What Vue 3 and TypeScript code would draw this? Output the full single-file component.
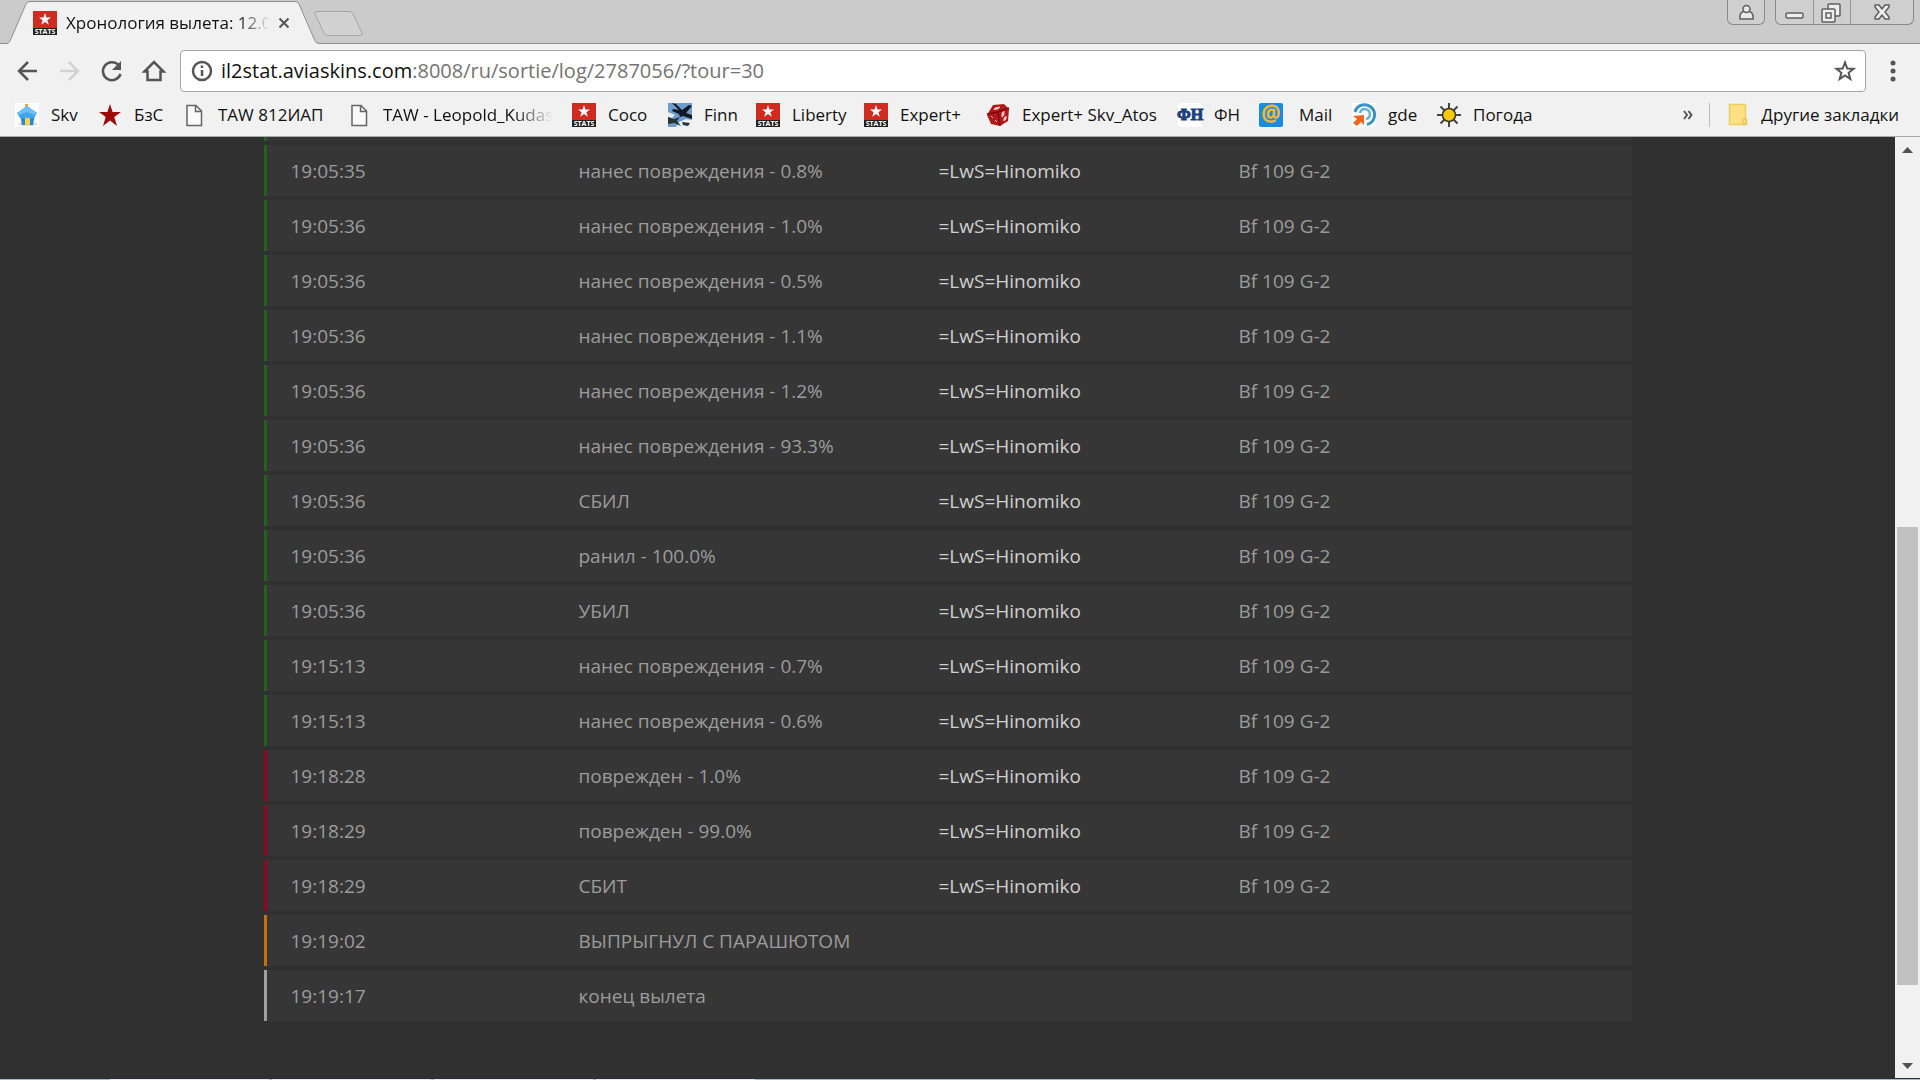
<script setup lang="ts">
interface Bookmark {
  label: string
  icon: string
  width: number
}
interface LogRow {
  time: string
  event: string
  tone: 'good' | 'bad' | 'warn' | 'end'
  player?: string
}

const bookmarks: Bookmark[] = [
  { label: 'Skv', icon: 'house', width: 83 },
  { label: 'БзС', icon: 'star', width: 84 },
  { label: 'TAW 812ИАП', icon: 'page', width: 165 },
  { label: 'TAW - Leopold_Kudas', icon: 'page', width: 225 },
  { label: 'Coco', icon: 'stats', width: 96 },
  { label: 'Finn', icon: 'plane', width: 88 },
  { label: 'Liberty', icon: 'stats', width: 108 },
  { label: 'Expert+', icon: 'stats', width: 122 },
  { label: 'Expert+ Skv_Atos', icon: 'dice', width: 192 },
  { label: 'ФН', icon: 'fn', width: 81 },
  { label: 'Mail', icon: 'mail', width: 93 },
  { label: 'gde', icon: 'gde', width: 85 },
  { label: 'Погода', icon: 'sun', width: 110 },
]

const enemy = '=LwS=Hinomiko'
const rows: LogRow[] = [
  { time: '19:05:35', event: 'нанес повреждения - 0.8%', tone: 'good', player: enemy },
  { time: '19:05:36', event: 'нанес повреждения - 1.0%', tone: 'good', player: enemy },
  { time: '19:05:36', event: 'нанес повреждения - 0.5%', tone: 'good', player: enemy },
  { time: '19:05:36', event: 'нанес повреждения - 1.1%', tone: 'good', player: enemy },
  { time: '19:05:36', event: 'нанес повреждения - 1.2%', tone: 'good', player: enemy },
  { time: '19:05:36', event: 'нанес повреждения - 93.3%', tone: 'good', player: enemy },
  { time: '19:05:36', event: 'СБИЛ', tone: 'good', player: enemy },
  { time: '19:05:36', event: 'ранил - 100.0%', tone: 'good', player: enemy },
  { time: '19:05:36', event: 'УБИЛ', tone: 'good', player: enemy },
  { time: '19:15:13', event: 'нанес повреждения - 0.7%', tone: 'good', player: enemy },
  { time: '19:15:13', event: 'нанес повреждения - 0.6%', tone: 'good', player: enemy },
  { time: '19:18:28', event: 'поврежден - 1.0%', tone: 'bad', player: enemy },
  { time: '19:18:29', event: 'поврежден - 99.0%', tone: 'bad', player: enemy },
  { time: '19:18:29', event: 'СБИТ', tone: 'bad', player: enemy },
  { time: '19:19:02', event: 'ВЫПРЫГНУЛ С ПАРАШЮТОМ', tone: 'warn' },
  { time: '19:19:17', event: 'конец вылета', tone: 'end' },
]
</script>

<template>
  <div class="browser">
    <header class="strip">
      <div class="tab">
        <svg class="tab-shape" width="320" height="44" viewBox="0 0 320 44" aria-hidden="true">
          <path d="M0 44V43.500H6Q9 43.500 10 41L26 4Q27 1.500 30 1.500H295Q298 1.500 299 4L315 41Q316 43.500 319 43.500V44Z" fill="#f1f1f1" />
          <path d="M0 43.500H6Q9 43.500 10 41L26 4Q27 1.500 30 1.500H295Q298 1.500 299 4L315 41Q316 43.500 320 43.500" fill="none" stroke="#8e8e8e" />
        </svg>
        <svg class="favicon" viewBox="0 0 24 24" aria-hidden="true">
          <rect width="24" height="17" fill="#cf2b20" /><rect y="17" width="24" height="7" fill="#202020" />
          <path d="M12 2l1.500 4.500H18l-3.600 2.800 1.400 4.500L12 11l-3.800 2.800 1.400-4.500L6 6.500h4.500z" fill="#fff" />
          <text x="12" y="23" class="stats-text">STATS</text>
        </svg>
        <span class="tab-title">Хронология вылета: 12.0</span>
        <button class="tab-close" aria-label="Закрыть вкладку">
          <svg width="12" height="12" viewBox="0 0 12 12"><path d="M1.500 1.500l9 9M10.500 1.500l-9 9" stroke="#555" stroke-width="2" /></svg>
        </button>
      </div>
      <button class="new-tab" aria-label="Новая вкладка">
        <svg width="52" height="26" viewBox="0 0 52 26"><path d="M4 .5H36Q39 .5 40 3L49 22Q50 24.500 47 24.500H15Q12 24.500 11 22L2 3Q1 .5 4 .5Z" fill="#d2d2d2" stroke="#a5a5a5" /></svg>
      </button>
      <div class="win">
        <button class="user" aria-label="Профиль">
          <svg width="36" height="24" viewBox="0 0 36 24"><g fill="#e9e9e9" stroke="#5f5f5f" stroke-width="1.500"><path d="M12 19q-1-7 5-8h3q6 1 5 8z" /><circle cx="18.500" cy="9" r="3.500" /></g></svg>
        </button>
        <div class="win-group">
          <button class="min" aria-label="Свернуть"><svg width="37" height="24" viewBox="0 0 37 24"><rect x="10" y="13" width="17" height="5" rx="1.500" fill="#eee" stroke="#5f5f5f" stroke-width="1.500" /></svg></button>
          <button class="max" aria-label="Восстановить"><svg width="36" height="24" viewBox="0 0 36 24"><g fill="#eee" stroke="#5f5f5f" stroke-width="1.500"><rect x="14" y="4" width="12" height="12" rx="1" /><rect x="8" y="9" width="13" height="13" rx="1" /><rect x="12" y="13" width="5" height="5" /></g></svg></button>
          <button class="close" aria-label="Закрыть"><svg width="62" height="24" viewBox="0 0 62 24"><path d="M24 5h4l3 4 3-4h4v2l-4 5 4 5v2h-4l-3-4-3 4h-4v-2l4-5-4-5z" fill="#eee" stroke="#5f5f5f" stroke-width="1.500" stroke-linejoin="round" /></svg></button>
        </div>
      </div>
    </header>

    <div class="toolbar">
      <nav class="nav">
        <button aria-label="Назад"><svg viewBox="0 0 24 24"><path d="M21 12H4M12 3l-9 9 9 9" class="line" /></svg></button>
        <button aria-label="Вперёд" class="off"><svg viewBox="0 0 24 24"><path d="M2 12h17M11 3l9 9-9 9" class="line" /></svg></button>
        <button aria-label="Обновить"><svg viewBox="0 0 24 24"><path d="M18.500 6A9 9 0 1 0 20.500 15" class="line" /><path d="M21 2v9h-9z" fill="#555" /></svg></button>
        <button aria-label="Домой"><svg viewBox="0 0 24 24"><path d="M2.500 12.500L12 3l9.500 9.500H18.500V21H5.500V12.500z" class="line" /></svg></button>
      </nav>
      <form class="omnibox" @submit.prevent>
        <svg class="info" width="22" height="22" viewBox="0 0 22 22" aria-hidden="true"><circle cx="11" cy="11" r="9" class="line" /><path d="M11 10v6M11 5.500v2.500" class="line" /></svg>
        <a class="url" href="#"><span class="host">il2stat.aviaskins.com</span>:8008/ru/sortie/log/2787056/?tour=30</a>
        <button class="fav" aria-label="Добавить в закладки"><svg width="22" height="22" viewBox="0 0 22 22"><path d="M11 2.500l2.300 6 6.200.3-4.900 4 1.700 6.200L11 15.500 5.700 19l1.700-6.200-4.900-4 6.200-.3z" fill="none" stroke="#555" stroke-width="2" /></svg></button>
      </form>
      <button class="menu" aria-label="Меню"><svg width="6" height="22" viewBox="0 0 6 22"><g fill="#555"><circle cx="3" cy="3" r="2.500" /><circle cx="3" cy="11" r="2.500" /><circle cx="3" cy="19" r="2.500" /></g></svg></button>
    </div>

    <nav class="bookmarks">
      <a v-for="b in bookmarks" :key="b.label" href="#" class="mark" :class="{ fade: b.label.length > 18, roomy: b.icon === 'mail' }" :style="{ width: b.width + 'px' }">
        <svg class="mark-icon" viewBox="0 0 24 24" aria-hidden="true">
          <template v-if="b.icon === 'stats'">
            <rect width="24" height="17" fill="#cf2b20" /><rect y="17" width="24" height="7" fill="#202020" />
            <path d="M12 2l1.500 4.500H18l-3.600 2.800 1.400 4.500L12 11l-3.800 2.800 1.400-4.500L6 6.500h4.500z" fill="#fff" />
            <text x="12" y="23" class="stats-text">STATS</text>
          </template>
          <template v-else-if="b.icon === 'house'">
            <rect width="24" height="24" fill="#fff" /><ellipse cx="13" cy="21" rx="10" ry="2" fill="#d5dde4" />
            <rect x="10" y="1" width="3" height="5" fill="#f0a63a" />
            <path d="M5 11h15l-2 11H7z" fill="#2b86d6" /><path d="M12 3l10 7-3 5H5l-3-5z" fill="#40a4ee" /><path d="M12 3l10 7-3 2-7-3-8 3-2-2z" fill="#6cc0f7" />
            <path d="M10 15h5v7h-5z" fill="#ffd24a" />
          </template>
          <path v-else-if="b.icon === 'star'" d="M12 1l2.600 8H23l-6.700 5 2.700 9-7-5.500L5 23l2.700-9L1 9h8.400z" fill="#9d0b0b" />
          <path v-else-if="b.icon === 'page'" d="M5 2.500h9L19.500 8v14.500H5zM13.500 2.500V8.500h6" fill="#fafafa" stroke="#666" stroke-width="1.500" />
          <template v-else-if="b.icon === 'plane'">
            <rect width="24" height="24" fill="#6d9dcb" /><path d="M8 24h16V17l-6-1-7 3zM0 9l7 3-3 3-4-1z" fill="#e9eef2" />
            <path d="M4 0l4 1 6 6 7-5 3 1-6 7 6 2v4l-9-3-3 1-1-3-7-3 1-2 6 1z" fill="#111a22" /><path d="M0 14l6 2 6-2-3 4 4 5-7-3-6 1zM14 19l8 1-2 3-5-1z" fill="#27323b" />
          </template>
          <template v-else-if="b.icon === 'dice'">
            <path d="M7 2l11-1 5 5-1 12-8 5-9-2-4-9z" fill="#b4181a" /><path d="M1 11l11-2 11-4M12 9l2 14" fill="none" stroke="#7d0b0d" stroke-width="1.500" />
            <path d="M9 5l5-1-2 2-4 .5zM5 13l2 2M9 17l2 2M16 10l2-2v4l-2 2zM18 15l2-2v3l-2 2z" fill="#f4c8c8" stroke="#f4c8c8" />
          </template>
          <template v-else-if="b.icon === 'fn'">
            <rect width="24" height="24" rx="3" fill="#fff" /><text x="12" y="17" class="fn-text">ФН</text>
          </template>
          <template v-else-if="b.icon === 'mail'">
            <rect width="24" height="24" rx="2" fill="#168de2" /><text x="12" y="18" class="at-text">@</text>
          </template>
          <template v-else-if="b.icon === 'gde'">
            <rect width="24" height="24" fill="#fff" /><path d="M3 9A10 10 0 1 1 15 21.500" fill="none" stroke="#3b93c4" stroke-width="3" /><path d="M8 10a5 5 0 1 1 6 6" fill="none" stroke="#65b3dc" stroke-width="2.500" />
            <path d="M1 13l11-1v10l-3-3-4 4-4-3 4-4z" fill="#f0641e" />
          </template>
          <template v-else>
            <path d="M12 0v24M0 12h24M3.500 3.500l17 17M20.500 3.500l-17 17" stroke="#444" stroke-width="2" /><circle cx="12" cy="12" r="6.500" fill="#f7c80e" stroke="#3a3524" stroke-width="1.500" />
          </template>
        </svg>
        <span class="mark-label">{{ b.label }}</span>
      </a>
      <div class="others">
        <button class="more" aria-label="Ещё закладки"><svg width="10" height="10" viewBox="0 0 10 10"><path d="M1 1l3 4-3 4M5.500 1l3 4-3 4" fill="none" stroke="#555" stroke-width="2" /></svg></button>
        <a href="#" class="folder">
          <svg width="20" height="24" viewBox="0 0 20 24" aria-hidden="true"><path d="M1.500 1.500h16v15h1v5h-17z" fill="#fbe184" stroke="#efcd5d" stroke-width="1.500" /><path d="M15 21v-5h3v5z" fill="#fbe184" stroke="#e6bd42" /></svg>
          <span>Другие закладки</span>
        </a>
      </div>
    </nav>

    <div class="view">
      <main class="page">
        <table class="log">
          <colgroup><col class="c-time"><col class="c-event"><col class="c-player"><col></colgroup>
          <tbody>
            <tr class="good clipped"><td colspan="4"></td></tr>
            <tr v-for="(r, i) in rows" :key="i" :class="r.tone">
              <td>{{ r.time }}</td>
              <td>{{ r.event }}</td>
              <td><a v-if="r.player" href="#" class="player">{{ r.player }}</a></td>
              <td>{{ r.player ? 'Bf 109 G-2' : '' }}</td>
            </tr>
          </tbody>
        </table>
      </main>
      <div class="scroll" aria-hidden="true">
        <svg width="11" height="6" viewBox="0 0 11 6"><path d="M5.500 0L11 6H0z" fill="#505050" /></svg>
        <div class="track"><div class="thumb"></div></div>
        <svg width="11" height="6" viewBox="0 0 11 6"><path d="M5.500 6L11 0H0z" fill="#505050" /></svg>
      </div>
    </div>
    <footer class="taskbar"><i></i><i></i><i></i><i></i></footer>
  </div>
</template>

<style>
body {
  margin: 0;
}
</style>

<style scoped>
* {
  box-sizing: border-box;
}
.browser {
  display: flex;
  flex-direction: column;
  height: 100vh;
  overflow: hidden;
  background: #f1f1f1;
  color: #111;
  font: 17px/24px "Open Sans", "Noto Sans", sans-serif;
}
button {
  display: flex;
  align-items: center;
  justify-content: center;
  padding: 0;
  border: 0;
  background: none;
}
a {
  color: inherit;
  text-decoration: none;
}
svg {
  display: block;
  flex: none;
  overflow: visible;
}
.line {
  fill: none;
  stroke: #555;
  stroke-width: 2.5;
}
.strip {
  display: flex;
  flex: none;
  height: 44px;
  background: #cbcbcb;
  box-shadow: inset 0 -1px #8e8e8e;
}
.tab {
  position: relative;
  display: flex;
  align-items: center;
  width: 320px;
  padding: 2px 0 0 33px;
}
.tab-shape {
  position: absolute;
  left: 0;
  top: 0;
}
.favicon {
  position: relative;
  width: 24px;
  height: 24px;
}
.tab-title {
  position: relative;
  width: 208px;
  margin-left: 9px;
  overflow: hidden;
  white-space: nowrap;
  mask-image: linear-gradient(90deg, #000 172px, transparent 204px);
}
.tab-close {
  position: relative;
  width: 12px;
  margin-left: 4px;
}
.new-tab {
  width: 52px;
  height: 26px;
  margin: 11px 0 0 -7px;
}
.win {
  display: flex;
  gap: 10px;
  height: 25px;
  margin: 0 6px 0 auto;
}
.user,
.win-group {
  display: flex;
  border: 1px solid #8a8a8a;
  border-top: 0;
  border-radius: 0 0 6px 6px;
  background: #cfcfcf;
}
.win-group button + button {
  border-left: 1px solid #999;
}
.toolbar {
  display: flex;
  flex: none;
  align-items: center;
  height: 54px;
  padding: 0 24px 0 16px;
}
.nav {
  display: flex;
  gap: 18px;
  width: 164px;
}
.nav svg {
  width: 24px;
  height: 24px;
}
.off {
  opacity: 0.2;
}
.omnibox {
  display: flex;
  flex: 1;
  align-items: center;
  height: 42px;
  padding: 0 9px 0 10px;
  border: 1px solid #a6a6a6;
  border-radius: 4px;
  background: #fff;
}
.url {
  flex: 1;
  margin-left: 8px;
  color: #737373;
  font-size: 20px;
}
.host {
  color: #111;
}
.menu {
  width: 6px;
  margin-left: 24px;
}
.bookmarks {
  display: flex;
  flex: none;
  align-items: center;
  height: 39px;
  padding: 0 21px 4px 15px;
  border-bottom: 1px solid #a9a9a9;
}
.mark {
  display: flex;
  flex: none;
  gap: 12px;
}
.mark.roomy {
  gap: 16px;
}
.mark-icon {
  width: 24px;
  height: 24px;
}
.mark-label {
  white-space: nowrap;
}
.fade .mark-label {
  width: 176px;
  overflow: hidden;
  mask-image: linear-gradient(90deg, #000 130px, transparent 170px);
}
.stats-text {
  fill: #fff;
  font: 700 7px "Open Sans", sans-serif;
  text-anchor: middle;
}
.fn-text {
  fill: #1c3f7c;
  stroke: #1c3f7c;
  font: 700 16px "Liberation Serif", serif;
  text-anchor: middle;
}
.at-text {
  fill: #f5b335;
  stroke: #f5b335;
  font: 400 21px "Open Sans", sans-serif;
  text-anchor: middle;
}
.others {
  display: flex;
  align-items: center;
  margin-left: auto;
}
.more {
  width: 10px;
  margin-right: 16px;
}
.folder {
  display: flex;
  gap: 13px;
  padding-left: 18px;
  border-left: 1px solid #bbb;
  white-space: nowrap;
}
.view {
  display: flex;
  flex: 1;
  min-height: 0;
}
.page {
  flex: 1;
  overflow: hidden;
  background: #303030;
}
.log {
  width: calc(100% - 527px);
  margin: -4px auto 0;
  border-spacing: 0 4px;
  table-layout: fixed;
  color: #9c9c9c;
  font-size: 19px;
  line-height: 28px;
}
.c-time {
  width: 291px;
}
.c-event {
  width: 360px;
}
.c-player {
  width: 300px;
}
.log td {
  height: 51px;
  padding: 0 0 0 24px;
  background: #363636;
  white-space: nowrap;
}
.log .clipped td {
  height: 4px;
}
.log td:first-child {
  border-left: 3px solid #21621c;
}
.log .bad td:first-child {
  border-color: #9a0020;
}
.log .warn td:first-child {
  border-color: #c96f05;
}
.log .end td:first-child {
  border-color: #a0a0a0;
}
.player {
  color: #d0d0d0;
}
.scroll {
  display: flex;
  flex-direction: column;
  align-items: center;
  width: 25px;
  padding: 10px 0 9px;
  background: #f1f1f1;
}
.track {
  display: flex;
  flex: 1;
  flex-direction: column;
  margin: 9px 0;
}
.track::before {
  flex: 365;
  content: "";
}
.track::after {
  flex: 69;
  content: "";
}
.thumb {
  flex: 459;
  width: 21px;
  background: #c1c1c1;
}
.taskbar {
  display: flex;
  flex: none;
  gap: 3px;
  height: 2px;
  padding-left: 110px;
  border-top: 1px solid #2a2d38;
  background: #aeb9cb;
}
.taskbar i {
  width: 159px;
  background: #e8e8ee;
}
</style>
